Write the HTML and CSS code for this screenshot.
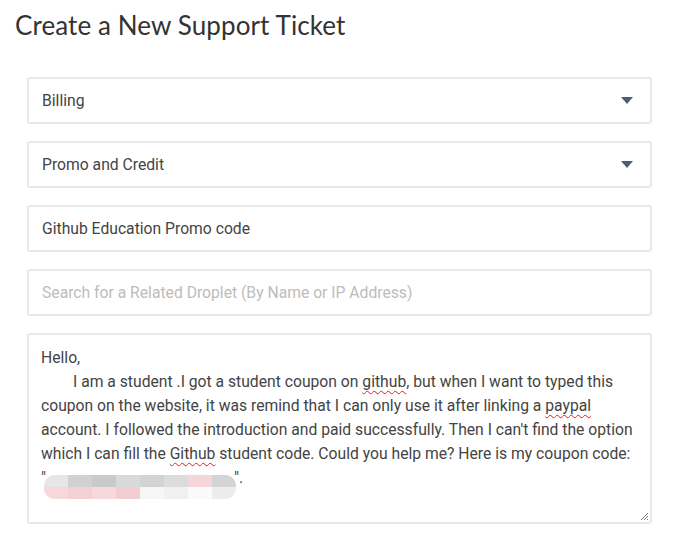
FILE: index.html
```html
<!DOCTYPE html>
<html>
<head>
<meta charset="utf-8">
<link rel="stylesheet" href="styles.css">
</head>
<body>
<div class="page">
  <h1 class="title">Create a New Support Ticket</h1>
  <form class="form">
    <div class="field select">
      <span class="value">Billing</span>
      <span class="caret"></span>
    </div>
    <div class="field select">
      <span class="value">Promo and Credit</span>
      <span class="caret"></span>
    </div>
    <div class="field">
      <span class="value">Github Education Promo code</span>
    </div>
    <div class="field">
      <span class="placeholder">Search for a Related Droplet (By Name or IP Address)</span>
    </div>
    <div class="textarea">
      <p class="line">Hello,</p>
      <p class="para"><span class="indent"></span>I am a student .I got a student coupon on <span class="typo">github</span>, but when I want to typed this<br>coupon on the website, it was remind that I can only use it after linking a <span class="typo">paypal</span><br>account. I followed the introduction and paid successfully. Then I can't find the option<br>which I can fill the <span class="typo">Github</span> student code. Could you help me? Here is my coupon code:<br>"<span class="blur"><span class="b1"></span><span class="b2"></span><span class="b3"></span><span class="b4"></span><span class="b5"></span><span class="b6"></span><span class="b7"></span><span class="b8"></span><span class="b9"></span><span class="b10"></span><span class="b11"></span><span class="b12"></span><span class="b13"></span><span class="b14"></span><span class="b15"></span><span class="b16"></span></span>".</p>
      <svg class="grip" width="10" height="10" viewBox="0 0 10 10"><path d="M9 2 L2 9 M9 5 L5 9 M9 8 L8 9" stroke="#777" stroke-width="1" fill="none"/></svg>
    </div>
  </form>
</div>
</body>
</html>
```

FILE: styles.css
```css
* { box-sizing: border-box; }
html, body { margin: 0; padding: 0; background: #fff; }
body { font-family: Roboto, "Liberation Sans", sans-serif; color: #333; }
.page { padding: 9px 24px 0 15px; }
.title {
  margin: 0;
  font-family: Lato, "Open Sans", sans-serif;
  font-weight: 400;
  font-size: 26px;
  line-height: 32px;
  color: #333;
  letter-spacing: 0.1px;
}
.form {
  margin: 36px 0 0 12px;
  width: 625px;
  display: flex;
  flex-direction: column;
  gap: 17px;
}
.field {
  height: 47px;
  border: 2px solid #e8e8e8;
  border-radius: 3px;
  display: flex;
  align-items: center;
  justify-content: space-between;
  padding: 0 17px 0 13px;
  font-size: 15.7px;
}
.value { color: #444; }
.placeholder { color: #bcbcbc; }
.caret {
  width: 0; height: 0;
  border-left: 6px solid transparent;
  border-right: 6px solid transparent;
  border-top: 7px solid #4f5b78;
}
.textarea {
  position: relative;
  height: 191px;
  border: 2px solid #e8e8e8;
  border-radius: 3px;
  padding: 11px 8px 0 12px;
  font-size: 15.7px;
  line-height: 24px;
  color: #444;
  white-space: nowrap;
}
.line, .para { margin: 0; }
.indent { display: inline-block; width: 32px; }
.typo {
  text-decoration: underline wavy #e02020;
  text-decoration-thickness: 1px;
  text-underline-offset: 3px;
}
.blur {
  display: inline-flex;
  flex-wrap: wrap;
  width: 192px;
  height: 24px;
  vertical-align: -4px;
  border-radius: 11px;
  overflow: hidden;
  margin-left: -2px;
  margin-right: -2px;
}
.blur span { width: 12.5%; height: 50%; }
.b1 { background: #e6e6e8; }
.b2 { background: #d0d1d3; }
.b3 { background: #c9cacc; }
.b4 { background: #d8d9db; }
.b5 { background: #d2d3d5; }
.b6 { background: #dcdcdd; }
.b7 { background: #f5d5d8; }
.b8 { background: #d4d4d6; }
.b9 { background: #f6d8db; }
.b10 { background: #f3d0d4; }
.b11 { background: #f5d9dc; }
.b12 { background: #f2cdd1; }
.b13 { background: #f6f6f6; }
.b14 { background: #f0f0f1; }
.b15 { background: #fafafa; }
.b16 { background: #ececed; }
.grip { position: absolute; right: 1px; bottom: 1px; }
```
